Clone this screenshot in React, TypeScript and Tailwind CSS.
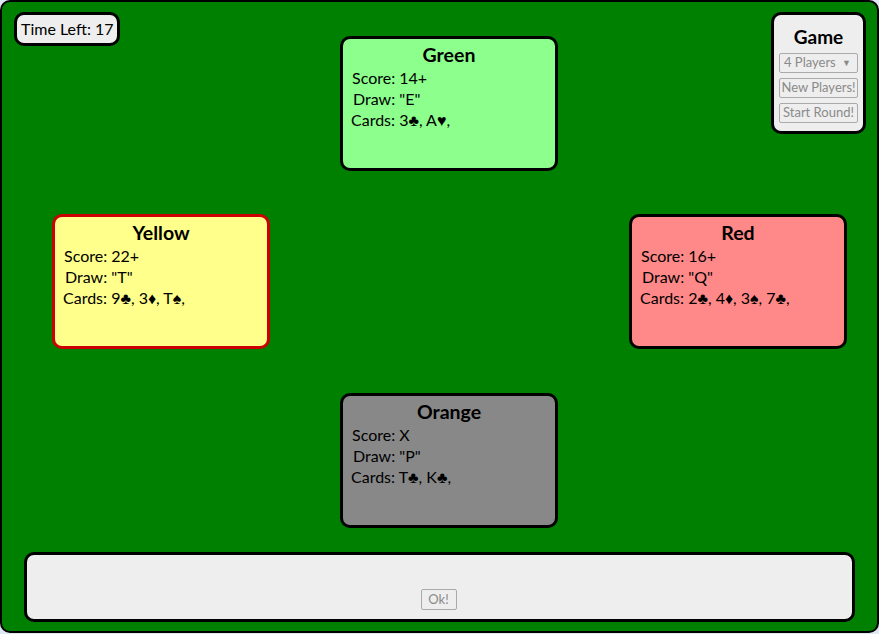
import React from "react";

type P = { name: string; score: string; draw: string; cards: string; bg: string; border: string };

function Card({ p }: { p: P }) {
  return (
    <div className={`h-[135px] w-[218px] rounded-[10px] border-[3px] ${p.border} ${p.bg} px-[8px] pt-[5px] text-[16px] leading-[21px] text-black`}>
      <div className="text-center text-[19.5px] font-bold leading-[22px]">{p.name}</div>
      <div className="mt-[1px] pl-[1px]">Score: {p.score}</div>
      <div className="pl-[2px]">Draw: "{p.draw}"</div>
      <div>Cards: {p.cards}</div>
    </div>
  );
}

const green: P = { name: "Green", score: "14+", draw: "E", cards: "3♣, A♥,", bg: "bg-[#8cff8c]", border: "border-black" };
const yellow: P = { name: "Yellow", score: "22+", draw: "T", cards: "9♣, 3♦, T♠,", bg: "bg-[#ffff8c]", border: "border-[#cc0000]" };
const red: P = { name: "Red", score: "16+", draw: "Q", cards: "2♣, 4♦, 3♠, 7♣,", bg: "bg-[#ff8888]", border: "border-black" };
const orange: P = { name: "Orange", score: "X", draw: "P", cards: "T♣, K♣,", bg: "bg-[#888888]", border: "border-black" };

export default function App() {
  return (
    <div className="h-[634px] w-[879px] bg-[#dfe9f3]" style={{ fontFamily: "Lato, 'Open Sans', sans-serif" }}>
      <div className="relative h-[633px] w-[879px] rounded-[10px] border-2 border-black bg-[#008000]">
        {/* Time left overlay */}
        <div className="absolute left-[12px] top-[10px] flex h-[34px] w-[106px] items-center rounded-[10px] border-[3px] border-black bg-[#eeeeee] pl-[4px] text-[16px] text-black">
          Time Left: 17
        </div>
        {/* Game menu overlay */}
        <div className="absolute left-[769px] top-[10px] flex h-[122px] w-[95px] flex-col items-center rounded-[10px] border-[3px] border-black bg-[#eeeeee] pt-[11px] text-[13px] text-[#8a8a8a]">
          <div className="text-[19px] font-bold leading-[22px] text-black">Game</div>
          <div className="mt-[5px] flex h-[20px] w-[79px] items-center justify-between rounded-[2px] border border-[#aaaaaa] bg-[#eeeeee] pl-[4px] pr-[6px]">
            <span>4 Players</span>
            <span className="text-[9px]">▼</span>
          </div>
          <div className="mt-[5px] flex h-[20px] w-[79px] items-center justify-center rounded-[2px] border border-[#aaaaaa] bg-[#eeeeee]">New Players!</div>
          <div className="mt-[5px] flex h-[20px] w-[79px] items-center justify-center rounded-[2px] border border-[#aaaaaa] bg-[#eeeeee]">Start Round!</div>
        </div>

        <div className="grid grid-cols-[218px_218px_218px] grid-rows-[135px_135px_136px] gap-x-[70px] pl-[50px] pt-[34px] [row-gap:43px]">
          <div className="col-start-2 row-start-1"><Card p={green} /></div>
          <div className="col-start-1 row-start-2"><Card p={yellow} /></div>
          <div className="col-start-3 row-start-2 ml-[1px]"><Card p={red} /></div>
          <div className="col-start-2 row-start-3 mt-[1px]"><Card p={orange} /></div>
        </div>

        <div className="ml-[22px] mt-[24px] flex h-[70px] w-[831px] flex-col items-center justify-end rounded-[10px] border-[3px] border-black bg-[#eeeeee] pb-[9px]">
          <div className="ml-[-2px] flex h-[21px] w-[36px] items-center justify-center rounded-[2px] border border-[#aaaaaa] bg-[#eeeeee] text-[13px] text-[#8a8a8a]">Ok!</div>
        </div>
      </div>
    </div>
  );
}
